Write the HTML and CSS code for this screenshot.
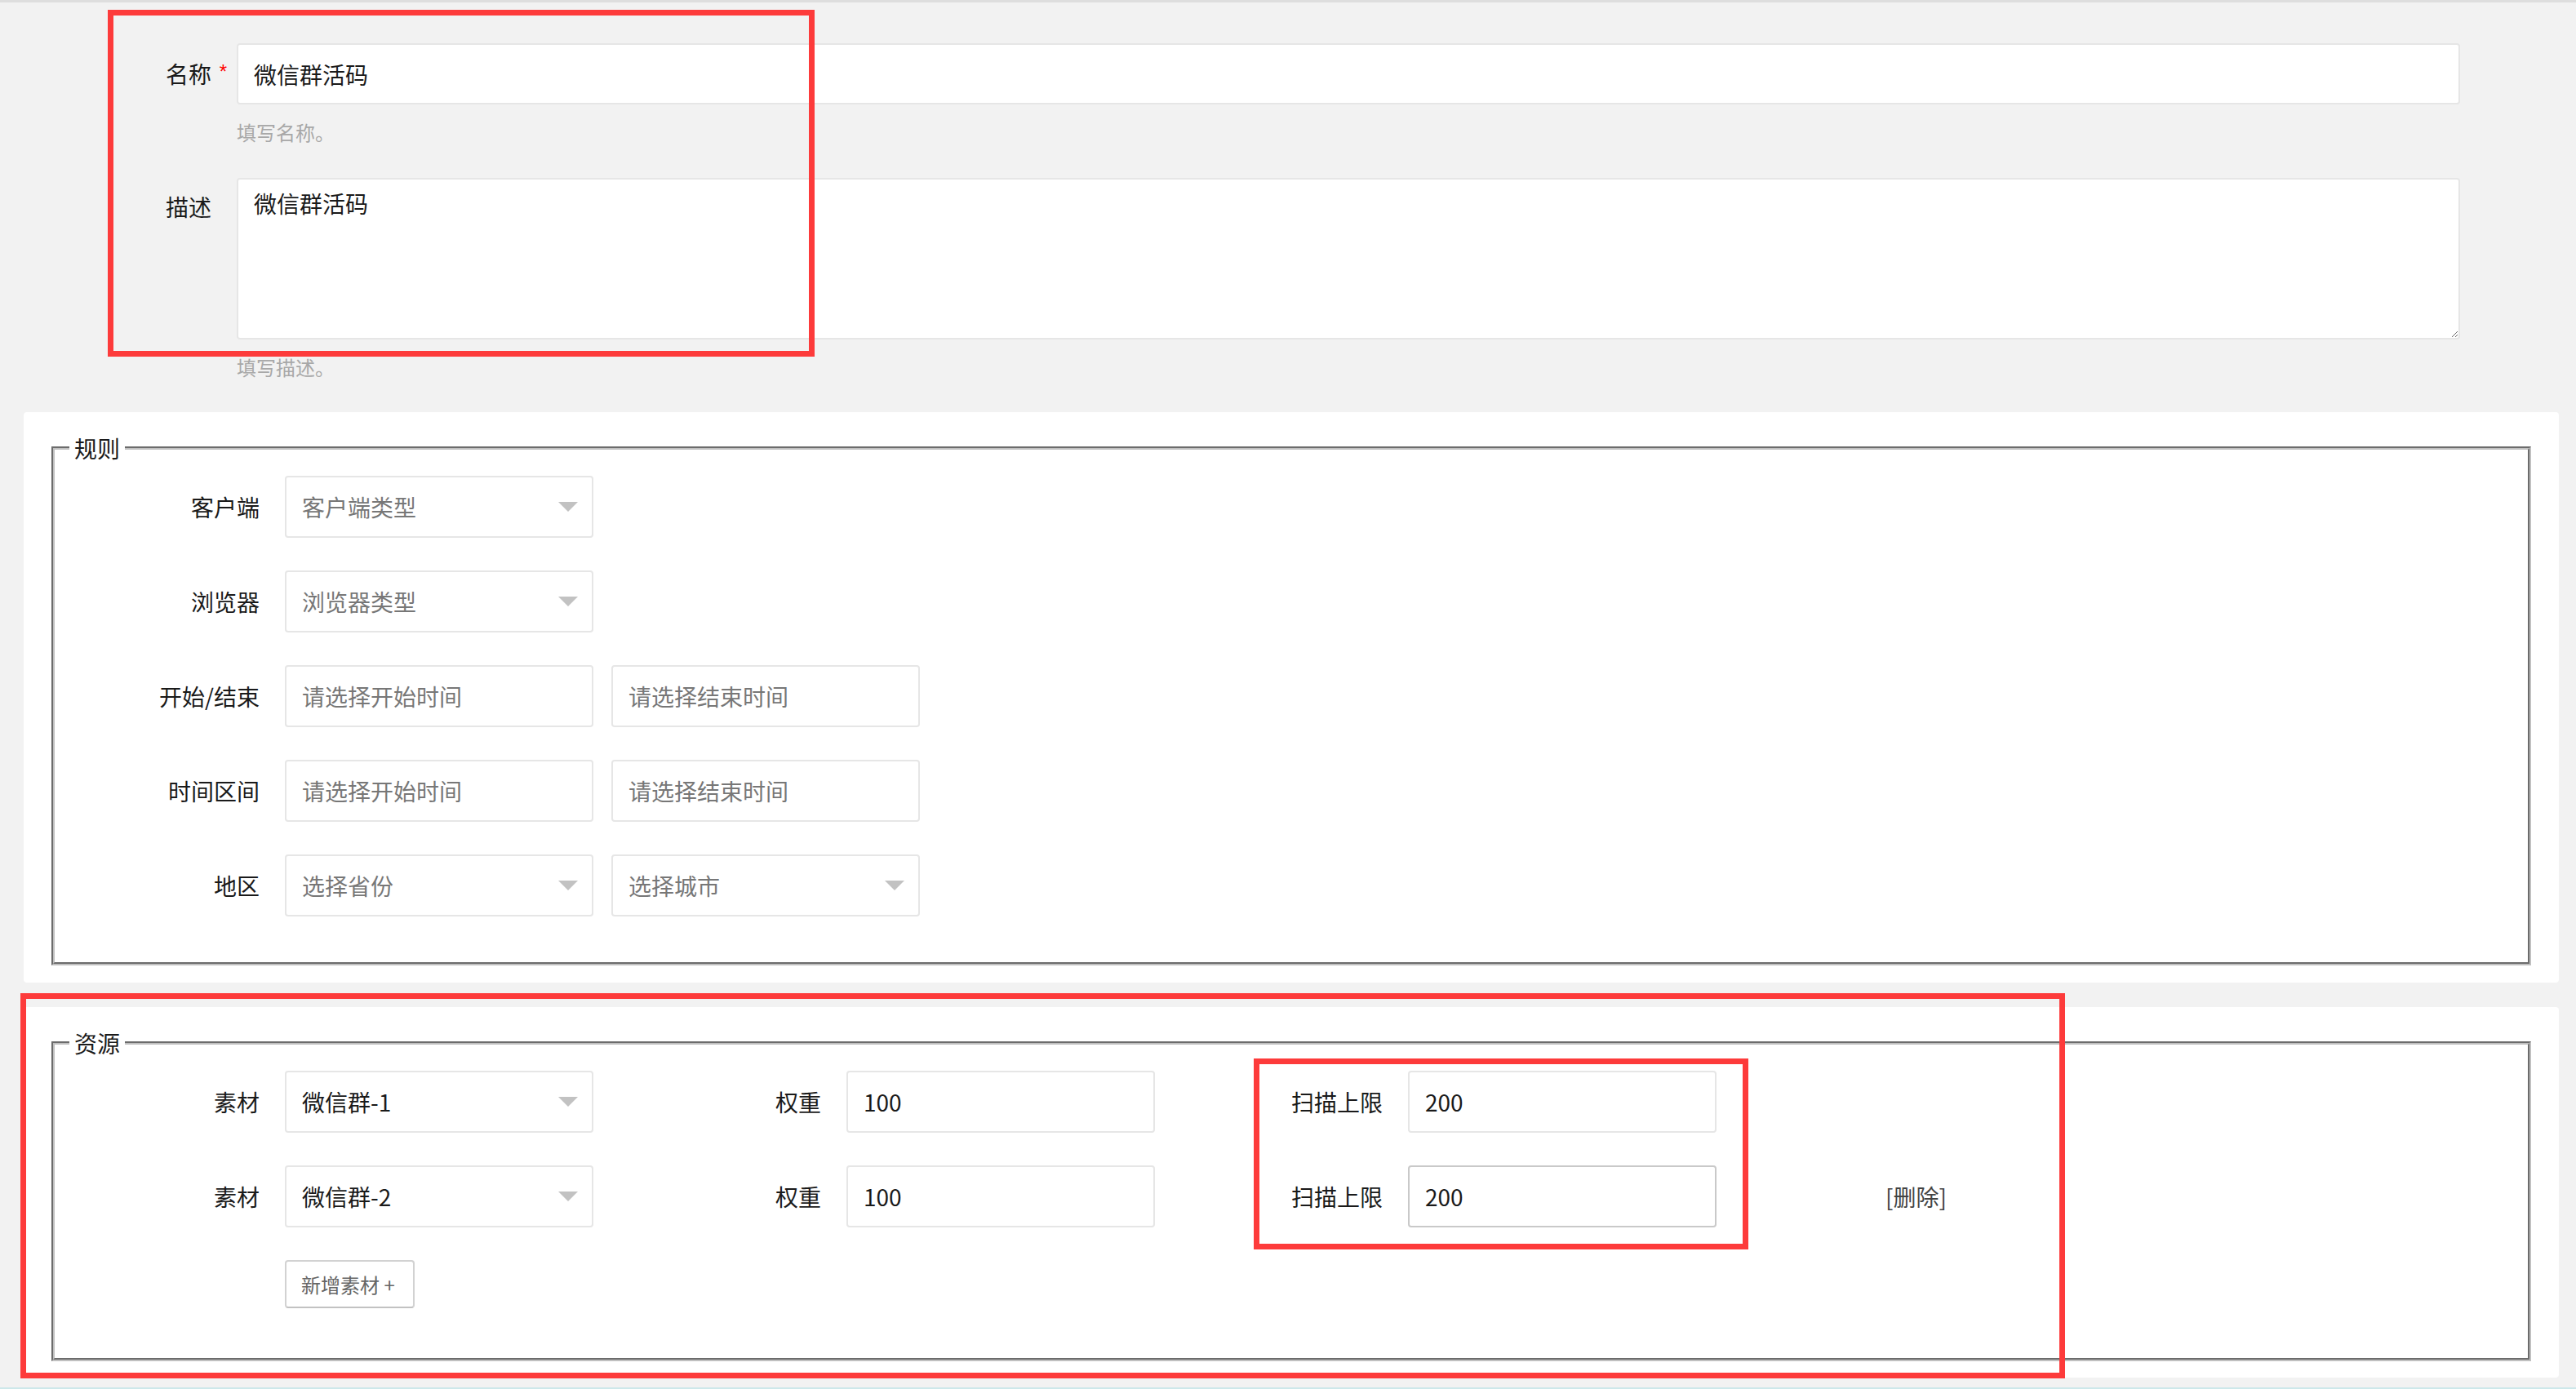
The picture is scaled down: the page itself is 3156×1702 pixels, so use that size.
FILE: index.html
```html
<!DOCTYPE html>
<html lang="zh-CN">
<head>
<meta charset="utf-8">
<title>微信群活码</title>
<link rel="stylesheet" href="styles.css">
</head>
<body>
<div class="page">
  <div class="topline"></div>

  <div class="basic">
    <div class="item">
      <label class="label label-name">名称<span class="req">*</span></label>
      <div class="block">
        <input class="input name-input" type="text" value="微信群活码">
        <div class="aux">填写名称。</div>
      </div>
    </div>
    <div class="item item-desc">
      <label class="label label-desc">描述</label>
      <div class="block">
        <textarea class="textarea">微信群活码</textarea>
        <div class="aux">填写描述。</div>
      </div>
    </div>
  </div>

  <section class="card">
    <fieldset class="group">
      <legend>规则</legend>
      <div class="row">
        <label class="label">客户端</label>
        <div class="select"><span class="ph">客户端类型</span><i class="caret"></i></div>
      </div>
      <div class="row">
        <label class="label">浏览器</label>
        <div class="select"><span class="ph">浏览器类型</span><i class="caret"></i></div>
      </div>
      <div class="row">
        <label class="label">开始/结束</label>
        <input class="field" type="text" placeholder="请选择开始时间">
        <input class="field next" type="text" placeholder="请选择结束时间">
      </div>
      <div class="row">
        <label class="label">时间区间</label>
        <input class="field" type="text" placeholder="请选择开始时间">
        <input class="field next" type="text" placeholder="请选择结束时间">
      </div>
      <div class="row">
        <label class="label">地区</label>
        <div class="select"><span class="ph">选择省份</span><i class="caret"></i></div>
        <div class="select next"><span class="ph">选择城市</span><i class="caret"></i></div>
      </div>
    </fieldset>
  </section>

  <section class="card card-last">
    <fieldset class="group group-res">
      <legend>资源</legend>
      <div class="row">
        <label class="label">素材</label>
        <div class="select"><span class="val">微信群-1</span><i class="caret"></i></div>
        <label class="label spaced">权重</label>
        <input class="field" type="text" value="100">
        <label class="label spaced">扫描上限</label>
        <input class="field" type="text" value="200">
      </div>
      <div class="row">
        <label class="label">素材</label>
        <div class="select"><span class="val">微信群-2</span><i class="caret"></i></div>
        <label class="label spaced">权重</label>
        <input class="field" type="text" value="100">
        <label class="label spaced">扫描上限</label>
        <input class="field hover" type="text" value="200">
        <span class="del">[删除]</span>
      </div>
      <div class="btn-row">
        <button class="btn" type="button">新增素材 +</button>
      </div>
    </fieldset>
  </section>

  <div class="bottomline"></div>

  <div class="mark mark-1"></div>
  <div class="mark mark-2"></div>
  <div class="mark mark-3"></div>
</div>
</body>
</html>
```

FILE: styles.css
```css
* {
  box-sizing: border-box;
}

html,
body {
  margin: 0;
  padding: 0;
}

body {
  background: #f2f2f2;
  font-family: "Noto Sans CJK SC", "Noto Sans", sans-serif;
  font-size: 28px;
  color: #1a1a1a;
}

.page {
  position: relative;
}

.topline {
  height: 3px;
  background: #dedede;
}

/* ---------- basic info ---------- */
.basic {
  padding: 50px 142px 0 70px;
}

.item {
  display: flex;
  align-items: flex-start;
}

.item-desc {
  margin-top: 36px;
}

.label {
  flex: none;
  position: relative;
  width: 220px;
  padding-right: 31px;
  text-align: right;
  line-height: 76px;
  white-space: nowrap;
}

.label-name {
  line-height: 75px;
}

.label-desc {
  line-height: 70px;
}

.req {
  position: absolute;
  right: 12px;
  top: 23px;
  font: 24px/24px "Liberation Sans", sans-serif;
  color: #f00;
}

.block {
  flex: 1;
  min-width: 0;
}

.input,
.textarea,
.field {
  font: inherit;
  color: #1a1a1a;
  background: #fff;
  border: 2px solid #e6e6e6;
  border-radius: 4px;
  outline: none;
}

.input {
  display: block;
  width: 100%;
  height: 75px;
  padding: 0 19px;
}

.textarea {
  display: block;
  width: 100%;
  height: 198px;
  padding: 9px 19px;
  line-height: 40px;
  resize: vertical;
}

.aux {
  margin-top: 14px;
  line-height: 40px;
  font-size: 24px;
  color: #a8a8a8;
}

/* ---------- cards ---------- */
.card {
  margin: 35px 21px 0 29px;
  padding: 28px 34px 21px;
  background: #fff;
  border-radius: 4px;
}

.card-last {
  margin-top: 30px;
  margin-bottom: 12px;
  padding-bottom: 20px;
}

.group {
  margin: 0;
  min-width: 0;
  border: 4px groove #c0c0c0;
  padding: 18px 0 56px 0;
}

.group-res {
  padding-bottom: 61px;
}

legend {
  margin-left: 18px;
  padding: 0 6px;
  font-size: 28px;
  line-height: 32px;
  color: #1a1a1a;
}

.row {
  display: flex;
  align-items: center;
  height: 76px;
  margin-left: 62px;
}

.row + .row {
  margin-top: 40px;
}

.select,
.field {
  flex: none;
  width: 378px;
  height: 76px;
}

.field {
  padding: 0 19px;
}

.field::placeholder {
  color: #777;
  opacity: 1;
}

.field.hover {
  border-color: #c9c9c9;
}

.select {
  display: flex;
  align-items: center;
  justify-content: space-between;
  padding: 0 17px 0 19px;
  background: #fff;
  border: 2px solid #e6e6e6;
  border-radius: 4px;
}

.ph {
  color: #777;
}

.val {
  color: #1a1a1a;
}

.caret {
  width: 0;
  height: 0;
  border-left: 12px solid transparent;
  border-right: 12px solid transparent;
  border-top: 12px solid #c2c2c2;
}

.next {
  margin-left: 22px;
}

.spaced {
  margin-left: 90px;
}

.del {
  margin-left: 207px;
  color: #444;
  line-height: 76px;
}

.btn-row {
  margin-top: 40px;
  margin-left: 62px;
  padding-left: 220px;
}

.btn {
  display: block;
  width: 159px;
  height: 59px;
  padding: 0 0 0 18px;
  text-align: left;
  font-family: inherit;
  font-size: 24px;
  color: #666;
  background: #fff;
  border: 2px solid #d2d2d2;
  border-bottom-color: #c2c2c2;
  border-radius: 4px;
  cursor: pointer;
}

.bottomline {
  height: 2px;
  background: #cde8ea;
}

/* ---------- red annotation boxes ---------- */
.mark {
  position: absolute;
  border: 7px solid #fd3b3b;
  pointer-events: none;
}

.mark-1 {
  left: 132px;
  top: 12px;
  width: 866px;
  height: 425px;
}

.mark-2 {
  left: 25px;
  top: 1217px;
  width: 2505px;
  height: 472px;
}

.mark-3 {
  left: 1536px;
  top: 1297px;
  width: 606px;
  height: 234px;
}
```
